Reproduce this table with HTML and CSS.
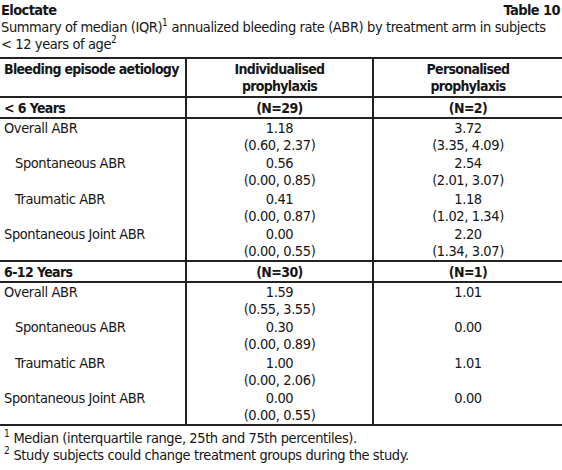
FILE: index.html
```html
<!DOCTYPE html>
<html lang="en">
<head>
  <meta charset="UTF-8">
  <meta name="viewport" content="width=device-width, initial-scale=1.0">
  <title>Eloctate - Table 10</title>
  <link rel="stylesheet" href="styles.css">
</head>
<body>
  <div class="caption">
    <div class="caption-top">
      <span class="product">Eloctate</span>
      <span class="table-no">Table 10</span>
    </div>
    <p class="summary">Summary of median (IQR)<sup>1</sup> annualized bleeding rate (ABR) by treatment arm in subjects<br>&lt; 12 years of age<sup>2</sup></p>
  </div>

  <table class="abr">
    <thead>
      <tr>
        <th class="label">Bleeding episode aetiology</th>
        <th>Individualised<br>prophylaxis</th>
        <th>Personalised<br>prophylaxis</th>
      </tr>
    </thead>
    <tbody>
      <tr class="group">
        <td class="label">&lt; 6 Years</td>
        <td>(N=29)</td>
        <td>(N=2)</td>
      </tr>
      <tr>
        <td class="label">Overall ABR</td>
        <td>1.18<br>(0.60, 2.37)</td>
        <td>3.72<br>(3.35, 4.09)</td>
      </tr>
      <tr>
        <td class="label sub">Spontaneous ABR</td>
        <td>0.56<br>(0.00, 0.85)</td>
        <td>2.54<br>(2.01, 3.07)</td>
      </tr>
      <tr>
        <td class="label sub">Traumatic ABR</td>
        <td>0.41<br>(0.00, 0.87)</td>
        <td>1.18<br>(1.02, 1.34)</td>
      </tr>
      <tr>
        <td class="label">Spontaneous Joint ABR</td>
        <td>0.00<br>(0.00, 0.55)</td>
        <td>2.20<br>(1.34, 3.07)</td>
      </tr>
      <tr class="group">
        <td class="label">6-12 Years</td>
        <td>(N=30)</td>
        <td>(N=1)</td>
      </tr>
      <tr>
        <td class="label">Overall ABR</td>
        <td>1.59<br>(0.55, 3.55)</td>
        <td>1.01</td>
      </tr>
      <tr>
        <td class="label sub">Spontaneous ABR</td>
        <td>0.30<br>(0.00, 0.89)</td>
        <td>0.00</td>
      </tr>
      <tr>
        <td class="label sub">Traumatic ABR</td>
        <td>1.00<br>(0.00, 2.06)</td>
        <td>1.01</td>
      </tr>
      <tr>
        <td class="label">Spontaneous Joint ABR</td>
        <td>0.00<br>(0.00, 0.55)</td>
        <td>0.00</td>
      </tr>
    </tbody>
  </table>

  <div class="notes">
    <p><sup>1</sup> Median (interquartile range, 25th and 75th percentiles).</p>
    <p><sup>2</sup> Study subjects could change treatment groups during the study.</p>
  </div>
</body>
</html>
```

FILE: styles.css
```css
*{
  margin: 0;
  padding: 0;
  box-sizing: border-box;
}
body{
  width: 562px;
  background-color: #fff;
  color: #161616;
  font-family: 'Liberation Sans Narrow', 'DejaVu Sans Condensed', 'Liberation Sans', sans-serif;
  font-size: 14.5px;
  line-height: 17px;
  letter-spacing: -0.4px;
}
sup{
  font-size: 10px;
  line-height: 0;
  vertical-align: 6px;
  letter-spacing: 0;
}

.caption{
  padding: 2px 0 0 1px;
  margin-bottom: 4px;
}
.caption-top{
  display: flex;
  justify-content: space-between;
  font-weight: bold;
  letter-spacing: -0.6px;
}
.table-no{
  padding-right: 2px;
}
.summary{
  letter-spacing: -0.4px;
  white-space: nowrap;
}

.abr{
  width: 562px;
  border-collapse: collapse;
  table-layout: fixed;
}
.abr th, .abr td{
  border: 2px solid #222;
  border-left: none;
  border-right: none;
  text-align: center;
  vertical-align: top;
  font-weight: normal;
}
.abr th{
  font-weight: bold;
  font-size: 14px;
  letter-spacing: -0.7px;
  padding: 2px 0 1px;
}
.abr th:first-child, .abr td:first-child{
  width: 186px;
  border-right: 2px solid #222;
}
.abr th:nth-child(2), .abr td:nth-child(2){
  width: 187px;
  border-right: 2px solid #222;
}
.abr .label{
  text-align: left;
  padding-left: 4px;
}
.abr .sub{
  padding-left: 15px;
}
.abr tbody td{
  height: 35.5px;
  padding-top: 1px;
  border-top: none;
  border-bottom: none;
}
.abr tr.group td{
  height: 21px;
  font-weight: bold;
  font-size: 14px;
  letter-spacing: -0.6px;
  padding-top: 2px;
  border-top: 2px solid #222;
  border-bottom: 2px solid #222;
}
.abr tbody tr:last-child td{
  border-bottom: 2px solid #222;
}

.notes{
  padding: 4px 0 0 4px;
}
```
